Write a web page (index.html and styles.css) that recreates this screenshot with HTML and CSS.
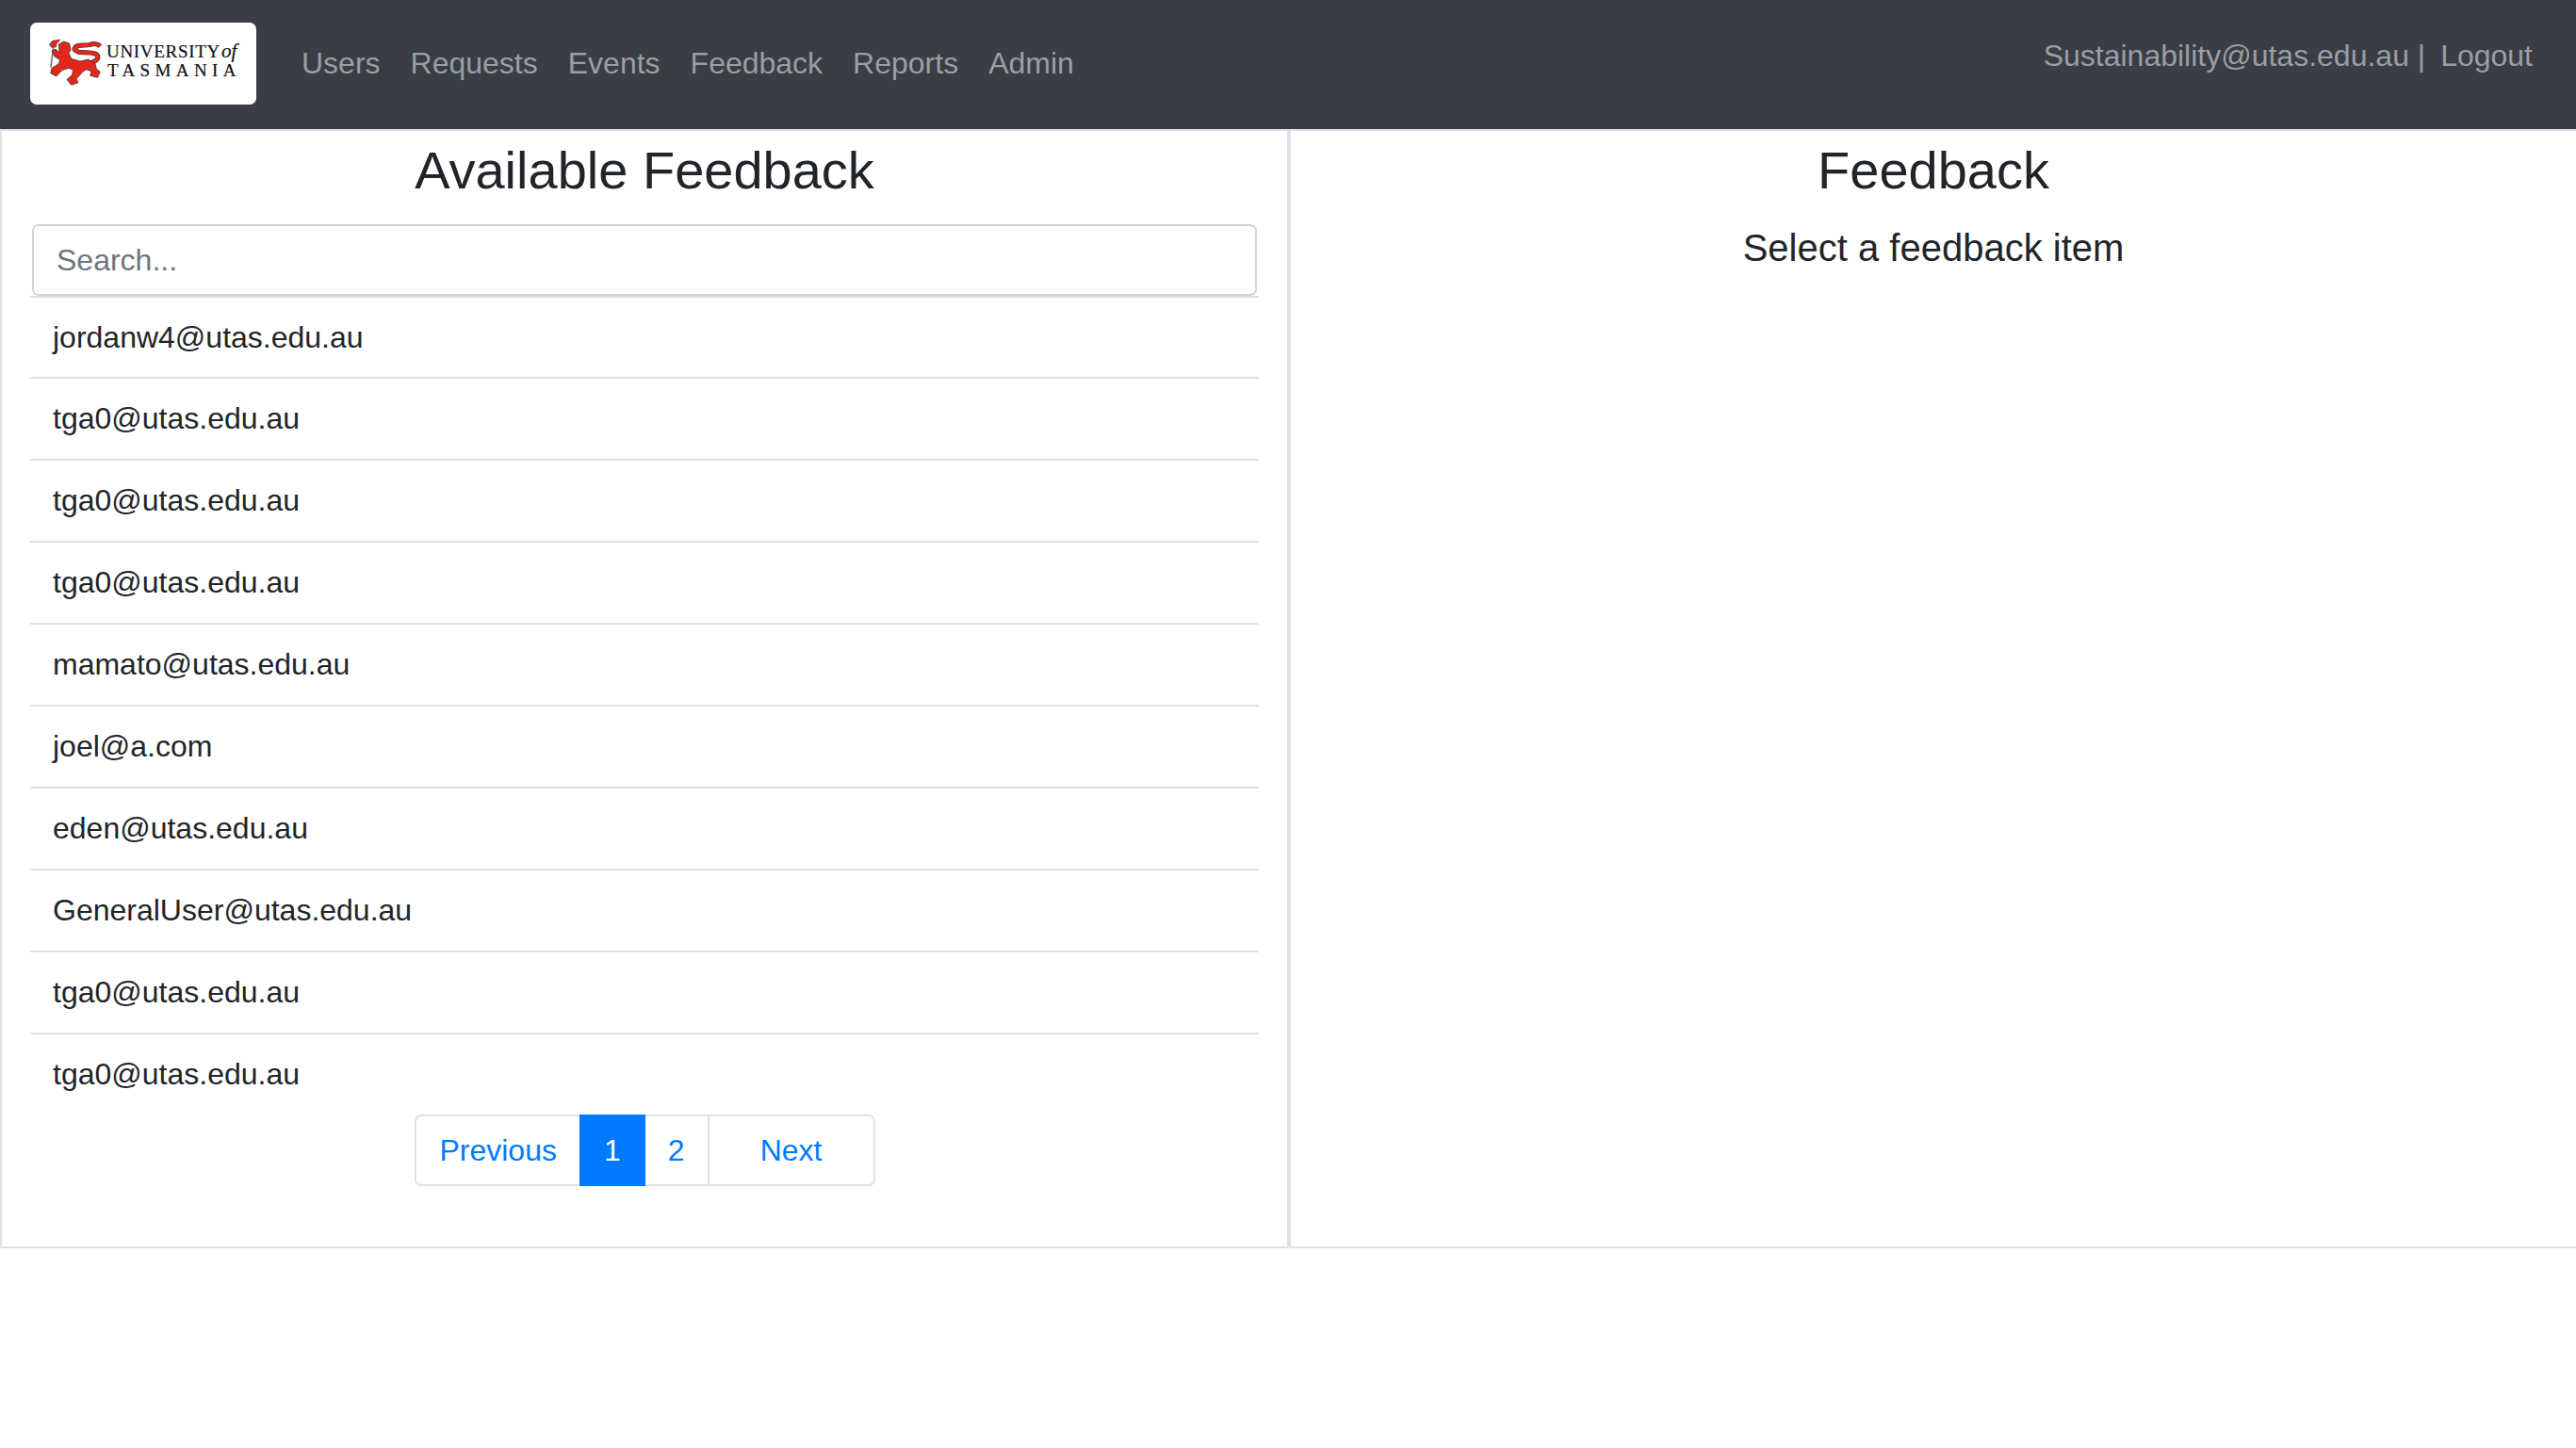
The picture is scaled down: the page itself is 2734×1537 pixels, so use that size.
FILE: index.html
```html
<!DOCTYPE html>
<html lang="en">
<head>
<meta charset="utf-8">
<title>Feedback</title>
<link rel="stylesheet" href="styles.css">
</head>
<body>
<nav class="navbar">
  <a class="brand" href="#">
    <svg class="lion" viewBox="0 0 210 174" width="70" height="58" aria-hidden="true">
      <path class="torch" d="M35 38 L27 104"/>
      <path class="flame" d="M22 30 L32 19 L58 15 L46 27 L43 39 L29 40 Z"/>
      <path class="tail-line" d="M136 92 C168 90 190 72 168 60 C146 50 114 64 102 46 C106 28 132 36 152 31 C162 27 176 28 184 36"/>
      <path class="tail-fill" d="M136 92 C168 90 190 72 168 60 C146 50 114 64 102 46 C106 28 132 36 152 31 C162 27 176 28 184 36"/>
      <path class="tail-slit" d="M114 44 C132 48 152 40 176 43"/>
      <path class="body" d="M52 30 L68 21 L86 27 L90 48 L84 58 L92 76 L120 84 L146 78 L168 92 L172 108 L184 118 L176 136 L152 130 L156 116 L140 110 L128 118 L114 134 L108 140 L114 152 L92 160 L78 142 L94 128 L98 112 L84 106 L64 112 L44 132 L26 122 L30 106 L52 92 L56 80 L38 68 L30 50 L42 46 L54 56 Z"/>
    </svg>
    <span class="wordmark">
      <span class="word-top">UNIVERSITY<i class="word-of">of</i></span>
      <span class="word-bottom">TASMANIA</span>
    </span>
  </a>
  <ul class="nav-links">
    <li><a href="#">Users</a></li>
    <li><a href="#">Requests</a></li>
    <li><a href="#">Events</a></li>
    <li><a href="#">Feedback</a></li>
    <li><a href="#">Reports</a></li>
    <li><a href="#">Admin</a></li>
  </ul>
  <div class="account">Sustainability@utas.edu.au |<a class="logout" href="#">Logout</a></div>
</nav>
<main class="columns">
  <section class="panel">
    <h2 class="panel-title">Available Feedback</h2>
    <input class="search" type="text" placeholder="Search...">
    <ul class="feedback-list">
      <li>jordanw4@utas.edu.au</li>
      <li>tga0@utas.edu.au</li>
      <li>tga0@utas.edu.au</li>
      <li>tga0@utas.edu.au</li>
      <li>mamato@utas.edu.au</li>
      <li>joel@a.com</li>
      <li>eden@utas.edu.au</li>
      <li>GeneralUser@utas.edu.au</li>
      <li>tga0@utas.edu.au</li>
      <li>tga0@utas.edu.au</li>
    </ul>
    <div class="pagination">
      <a class="page prev" href="#">Previous</a>
      <a class="page active" href="#">1</a>
      <a class="page" href="#">2</a>
      <a class="page next" href="#">Next</a>
    </div>
  </section>
  <section class="panel">
    <h2 class="panel-title">Feedback</h2>
    <p class="hint">Select a feedback item</p>
  </section>
</main>
</body>
</html>
```
FILE: styles.css
```css
* { box-sizing: border-box; }
html, body { margin: 0; padding: 0; }
body {
  background: #fff;
  color: #212529;
  font-family: "Liberation Sans", Arial, sans-serif;
  font-size: 32px;
  overflow-x: hidden;
}
a { text-decoration: none; }
ul { list-style: none; margin: 0; padding: 0; }

.navbar {
  display: flex;
  align-items: center;
  height: 137px;
  padding: 0 46px 0 32px;
  background: #393d45;
}
.brand {
  display: flex;
  align-items: center;
  width: 240px;
  height: 87px;
  margin-bottom: 2px;
  padding-left: 13px;
  background: #fff;
  border-radius: 7px;
}
.lion { flex: none; margin: -3px -2px 0 0; }
.torch { fill: none; stroke: #777; stroke-width: 5; }
.flame { fill: #e2281b; stroke: #222; stroke-width: 1.5; }
.tail-line { fill: none; stroke: #222; stroke-width: 15; }
.tail-fill { fill: none; stroke: #e2281b; stroke-width: 12; }
.tail-slit { fill: none; stroke: #fff; stroke-width: 3; }
.body { fill: #e2281b; stroke: #222; stroke-width: 2; stroke-linejoin: round; }
.wordmark {
  display: flex;
  flex-direction: column;
  margin-bottom: 6px;
  font-family: "Liberation Serif", "Times New Roman", serif;
  font-size: 19px;
  line-height: 20px;
  color: #111;
  -webkit-text-stroke: 0.2px #111;
}
.word-top { letter-spacing: 0.7px; white-space: nowrap; }
.word-of { font-size: 21px; letter-spacing: 0; margin-left: 1px; }
.word-bottom { letter-spacing: 5.4px; margin-left: 1px; white-space: nowrap; }

.nav-links { display: flex; gap: 32px; margin-left: 48px; margin-bottom: 2px; }
.nav-links a, .account, .logout { color: #9c9ea2; }
.account { margin-left: auto; margin-bottom: 18px; white-space: nowrap; }
.logout { margin-left: 16px; }

.columns { display: flex; height: 1188px; overflow: hidden; }
.panel {
  flex: 0 0 1368px;
  border: 2px solid #dee2e6;
  padding: 0 30px;
  text-align: center;
}
.panel-title {
  margin: 0;
  font-size: 56px;
  font-weight: 400;
  line-height: 67px;
  color: #212529;
  height: 99px;
  padding-top: 8px;
}
.search {
  display: block;
  width: calc(100% - 4px);
  height: 76px;
  margin: 0 2px;
  padding: 0 24px;
  font: inherit;
  color: #495057;
  border: 2px solid #ced4da;
  border-radius: 7px;
  background: #fff;
  outline: none;
}
.search::placeholder { color: #6c757d; opacity: 1; }
.feedback-list { text-align: left; }
.feedback-list li {
  height: 87px;
  line-height: 85px;
  padding-left: 24px;
  border-top: 2px solid #dee2e6;
}
.feedback-list li:first-child { height: 86px; }
.pagination { display: flex; justify-content: center; padding-left: 3px; }
.page {
  height: 76px;
  line-height: 72px;
  padding: 0 24px;
  border: 2px solid #dee2e6;
  margin-left: -2px;
  color: #007bff;
  background: #fff;
}
.page.prev { border-radius: 7px 0 0 7px; }
.page.next { width: 178px; text-align: center; border-radius: 0 7px 7px 0; }
.page.active { background: #007bff; border-color: #007bff; color: #fff; position: relative; }
.hint { margin: 0; padding-top: 2px; font-size: 40px; line-height: 47px; color: #212529; }
```
